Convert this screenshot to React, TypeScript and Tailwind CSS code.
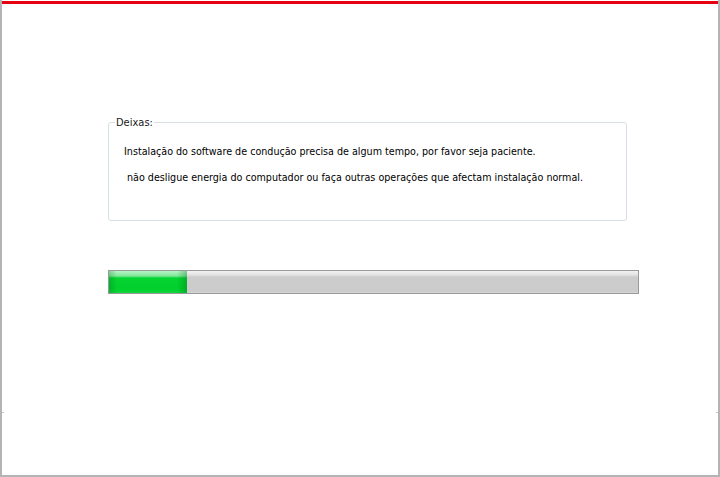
const App = () => {
  return (
    <div
      className="w-[720px] h-[477px] bg-white border-x-2 border-b-2 border-[#b4b4b4] flex flex-col"
      style={{ fontFamily: '"DejaVu Sans Condensed", "DejaVu Sans", "Liberation Sans", sans-serif' }}
    >
      {/* Red header line */}
      <div className="mt-px h-[3px] bg-[#e60012]" />

      <div className="pl-[106px] pt-[118px]">
        {/* Message group */}
        <div className="relative w-[519px] h-[99px] border border-[#d5dfe5] rounded-[3px] pl-[15px] pt-[22px] text-[10.65px] leading-[13px] text-black">
          <span className="absolute left-[6px] top-[-7px] bg-white px-[1px] text-[11px] leading-[13px] text-[#1a1a1a]">
            Deixas:
          </span>
          <p className="whitespace-pre">Instalação do software de condução precisa de algum tempo, por favor seja paciente.</p>
          <p className="whitespace-pre mt-[13px] pl-[3px]">não desligue energia do computador ou faça outras operações que afectam instalação normal.</p>
        </div>

        {/* Progress bar */}
        <div className="mt-[49px] w-[531px] h-[24px] border border-[#9a9a9a] bg-[linear-gradient(to_bottom,#f2f2f2_0px,#e2e2e2_4px,#cccccc_6px,#cbcbcb_20px,#d6d6d6_22px)] flex">
          <div className="w-[78px] h-full relative bg-[linear-gradient(to_bottom,#b9f3c5_0px,#7fe79a_5px,#05d331_7px,#00cf2c_18px,#12d83c_22px)]">
            <div className="absolute inset-0 bg-[linear-gradient(to_right,rgba(0,90,20,0.25)_0px,rgba(0,0,0,0)_8px,rgba(0,0,0,0)_68px,rgba(0,90,20,0.3)_78px)]" />
          </div>
        </div>
      </div>

      {/* Small separator ticks */}
      <div className="mt-[118px] flex justify-between">
        <div className="w-[2px] h-px bg-[#c8c8c8]" />
        <div className="w-[2px] h-px bg-[#c8c8c8]" />
      </div>
    </div>
  );
};

export default App;
